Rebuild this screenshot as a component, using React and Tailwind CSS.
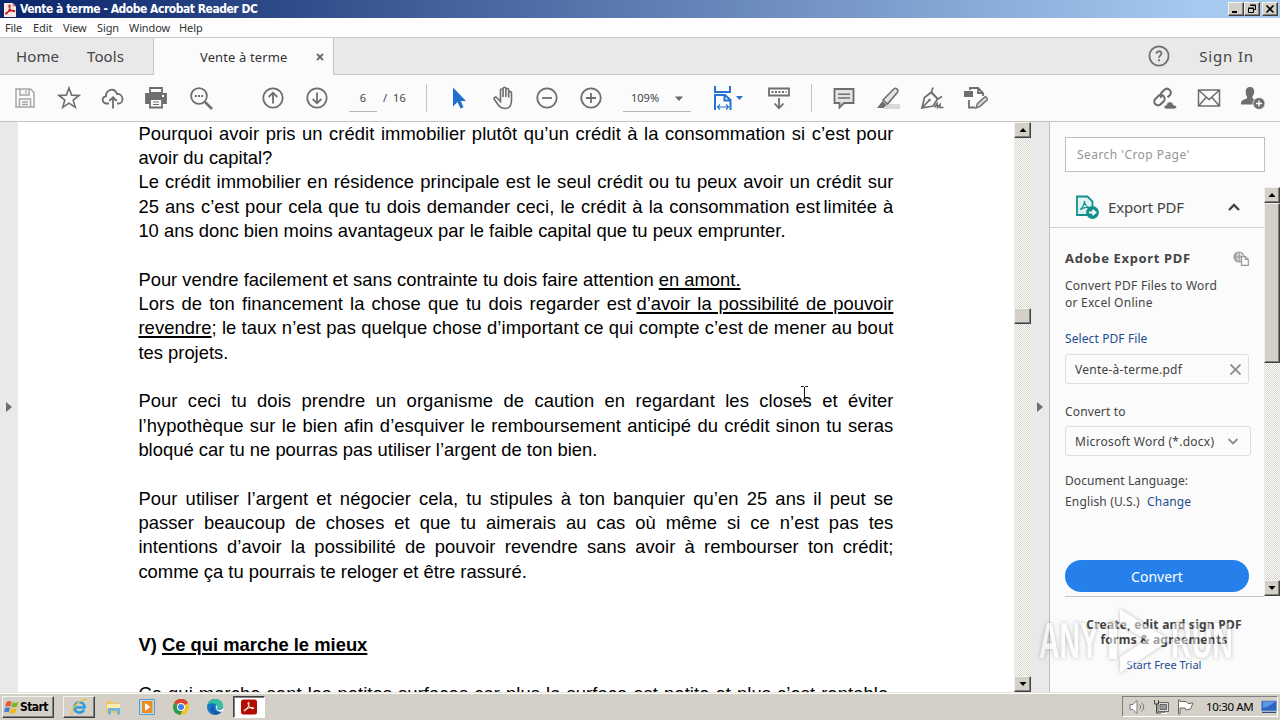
import clsx from 'clsx'

const UI = "font-['Noto_Sans','Open_Sans',sans-serif]"
const RAISED =
  'bg-[#d4d0c8] border border-t-[#f4f2ee] border-l-[#f4f2ee] border-r-[#404040] border-b-[#404040] shadow-[inset_-1px_-1px_0_#808080]'
const DITHER = 'bg-[repeating-conic-gradient(#fdfdfb_0_25%,#d8d5ce_0_50%)] bg-[length:2px_2px]'

const Icon = ({ children, size = 24, className }) => (
  <svg
    width={size}
    height={size}
    viewBox="0 0 24 24"
    fill="none"
    stroke="#6e6e6e"
    strokeWidth="1.8"
    className={clsx('block shrink-0', className)}
  >
    {children}
  </svg>
)

const Cell = ({ children }) => (
  <div className="w-11 h-full flex items-center justify-center shrink-0">{children}</div>
)

const WinButton = ({ children, className }) => (
  <div className={clsx(RAISED, 'w-4 h-[14px] flex items-center justify-center', className)}>
    <svg width="10" height="10" viewBox="0 0 10 10" fill="none" stroke="#000" className="block">
      {children}
    </svg>
  </div>
)

const ArrowButton = ({ down, className }) => (
  <div className={clsx(RAISED, 'h-4 w-full shrink-0 flex items-center justify-center', className)}>
    <svg width="8" height="4" viewBox="0 0 8 4" className="block">
      <path d={down ? 'M0.5 0h7L4 4z' : 'M0.5 4h7L4 0z'} fill="#000" />
    </svg>
  </div>
)

const TitleBar = () => (
  <div className="h-[18px] shrink-0 flex items-center pl-1 pr-[2px] bg-[linear-gradient(90deg,#0a246a,#a6caf0_94%)]">
    <svg width="12" height="15" viewBox="0 0 12 15" className="block">
      <path d="M0 1h8.500l3.500 3.500V15H0z" fill="#f6e9e8" />
      <path d="M8.500 1v3.500H12z" fill="#c98a86" />
      <path
        d="M2 12c1.500-.3 4-4.500 4-8 0-1-1-1-1 0 0 3 3 5.500 5 5.500 1.200 0 .8-1-.5-1C7 8.500 4 9.500 2.500 10.500 1.500 11.300 1.500 12 2 12z"
        fill="none"
        stroke="#c4231c"
        strokeWidth="1.300"
      />
    </svg>
    <span className="ml-1 text-[12px] leading-[18px] font-bold text-white tracking-[-0.480px] font-['DejaVu_Sans_Condensed','DejaVu_Sans',sans-serif] whitespace-nowrap">
      Vente à terme - Adobe Acrobat Reader DC
    </span>
    <div className="ml-auto flex">
      <WinButton>
        <path d="M1 8h5" strokeWidth="2" />
      </WinButton>
      <WinButton>
        <path d="M3.500 1.500h5v4h-2M3 1h6M1.500 4.500h5v4h-5zM1 4h6" />
      </WinButton>
      <WinButton className="ml-[2px]">
        <path d="M1.500 1.500l7 7M8.500 1.500l-7 7" strokeWidth="1.600" />
      </WinButton>
    </div>
  </div>
)

const MenuBar = () => (
  <div className="h-5 shrink-0 flex items-center pl-[5px] pt-[2px] bg-[#fdfdfd] border-b border-[#c9c9c9] text-[11px] tracking-[-0.100px] text-[#333]">
    <span className="w-7">File</span>
    <span className="w-[30px]">Edit</span>
    <span className="w-[34px]">View</span>
    <span className="w-8">Sign</span>
    <span className="w-[50px]">Window</span>
    <span>Help</span>
  </div>
)

const Tabs = () => (
  <div className="h-[37px] shrink-0 flex bg-[#e9e9e9] text-[#444]">
    <div className="w-[154px] flex items-center pl-4 border-b border-r border-[#c6c6c6] text-[15px] tracking-[0.100px]">
      <span className="w-[71px]">Home</span>
      <span>Tools</span>
    </div>
    <div className="w-[179px] flex items-center justify-between pl-[46px] pr-[9px] bg-[#fbfbfb] text-[13px] text-[#333]">
      <span className="tracking-[0.120px] pt-[2px]">Vente à terme</span>
      <svg width="8" height="8" viewBox="0 0 8 8" stroke="#6b6b6b" strokeWidth="1.900" className="block">
        <path d="M1 1l6 6M7 1L1 7" />
      </svg>
    </div>
    <div className="flex-1 flex items-center justify-end border-b border-l border-[#c6c6c6] pr-[26px]">
      <Icon>
        <circle cx="12" cy="12" r="9.600" />
        <path d="M9.500 9.800c0-3.400 5-3.200 5-.4 0 1.900-2.500 2-2.500 4.300M12 15.300v2" />
      </Icon>
      <span className="ml-[28px] text-[15px] tracking-[0.850px]">Sign In</span>
    </div>
  </div>
)

const Toolbar = () => (
  <div className="h-[47px] shrink-0 flex items-center pl-[3px] pr-[5px] bg-[#fbfbfb] border-b border-[#c4c4c4] text-[11px] text-[#444]">
    <Cell>
      <Icon className="opacity-60" size={24}>
        <path d="M3 3h14.500L21 6.500V21H3zM7 3v6h9V3M6.500 21v-8h11v8M13 4.500v3M9 16h6M9 18.500h6" strokeWidth="1.500" />
      </Icon>
    </Cell>
    <Cell>
      <Icon>
        <path d="M12 2l2.600 7.100 7.500.3-5.900 4.700 2.100 7.300L12 17.200l-6.300 4.200 2.100-7.300L1.900 9.400l7.500-.3z" strokeWidth="1.600" />
      </Icon>
    </Cell>
    <Cell>
      <Icon>
        <path d="M8 17.500H6C.5 17.500.3 11 5 10.300 5 3.500 13.500 1 16 8c6-1 8 9.500 1.500 9.500H16M12 22.500V11.500M8.300 15l3.700-3.800 3.700 3.800" />
      </Icon>
    </Cell>
    <Cell>
      <Icon className="mr-[2px]">
        <path d="M6 2h12v5H6z" fill="#fbfbfb" />
        <path d="M2 8h20v9H2z" fill="#6e6e6e" />
        <path d="M6 13h12v8.500H6z" fill="#fbfbfb" />
        <path d="M9 16h6M9 18.500h6" strokeWidth="1.200" />
        <path d="M18 10h2" stroke="#fff" />
      </Icon>
    </Cell>
    <Cell>
      <Icon>
        <circle cx="10" cy="10" r="7.900" />
        <path d="M16 16l7 7" strokeWidth="2.500" />
        <path d="M5.800 10h2M9 10h2M12.200 10h2" />
      </Icon>
    </Cell>
    <div className="w-7" />
    <Cell>
      <Icon>
        <circle cx="12" cy="12" r="9.700" />
        <path d="M12 17.500V7M7.700 11L12 6.700l4.300 4.300" />
      </Icon>
    </Cell>
    <Cell>
      <Icon>
        <circle cx="12" cy="12" r="9.700" />
        <path d="M12 6.500V17M7.700 13l4.300 4.300 4.300-4.300" />
      </Icon>
    </Cell>
    <div className="w-[87px] flex pl-[10px] items-center">
      <div className="w-7 h-[27px] mt-[1px] border-b border-[#b9b9b9] text-center leading-[25px]">6</div>
      <span className="ml-[6px]">/</span>
      <span className="ml-[6px]">16</span>
    </div>
    <div className="w-px h-7 bg-[#c4c4c4] mr-[10px]" />
    <Cell>
      <Icon>
        <path d="M6 1.500v19l4.500-4.500 3 6.500 3-1.300-2.800-6.200h5.300z" fill="#1f6fcf" stroke="none" />
      </Icon>
    </Cell>
    <Cell>
      <Icon>
        <path
          d="M8 13V4.500c0-2 2.600-2 2.600 0V11 2.800c0-2 2.800-2 2.800 0V11 4c0-2 2.800-2 2.800 0v7.500V7c0-1.800 2.800-1.800 2.800 0v7c0 5.500-2 8.500-6.500 8.500-4 0-6-2-10.700-9.300-.8-1.800 1.400-2.800 2.800-1.200L8 15.500z"
          transform="translate(1.500 0)"
          strokeWidth="1.600"
        />
      </Icon>
    </Cell>
    <Cell>
      <Icon>
        <circle cx="12" cy="12" r="9.700" />
        <path d="M7 12h10" />
      </Icon>
    </Cell>
    <Cell>
      <Icon>
        <circle cx="12" cy="12" r="9.700" />
        <path d="M7 12h10M12 7v10" />
      </Icon>
    </Cell>
    <div className="ml-[10px] w-[68px] h-[27px] mt-[1px] flex items-center justify-between pl-2 pr-2 border-b border-[#b9b9b9]">
      <span>109%</span>
      <svg width="8" height="5" viewBox="0 0 8 5">
        <path d="M0 .5h8L4 5z" fill="#666" />
      </svg>
    </div>
    <div className="w-[66px] pl-[20px] flex items-center">
      <Icon className="-mt-px" size={24}>
        <path d="M4 0v6h15V0M4 24V9h10l5.500 5v10M13.500 9v5.500h6" stroke="#2672cf" strokeWidth="2" />
        <path d="M7 21h10M9 18.500L6.500 21 9 23.500M15 18.500l2.500 2.500-2.500 2.500" stroke="#2672cf" strokeWidth="1.200" />
      </Icon>
      <svg width="7" height="4" viewBox="0 0 7 4" className="block ml-px shrink-0">
        <path d="M0 0h7L3.500 4z" fill="#2672cf" />
      </svg>
    </div>
    <Cell>
      <Icon>
        <path d="M2 2.500h20v7H2zM12 12v10M7.500 17.500l4.500 4.700 4.500-4.700" />
        <path d="M4.500 6h15" strokeDasharray="2 1.500" />
      </Icon>
    </Cell>
    <div className="ml-[10px] w-px h-7 bg-[#c4c4c4] mr-[10px]" />
    <Cell>
      <Icon>
        <path d="M2.500 3h19v14H12l-4.500 4.500V17h-5z" fill="#e3e3e3" />
        <path d="M6 8.300h12M6 12h12" strokeWidth="1.500" />
      </Icon>
    </Cell>
    <Cell>
      <Icon>
        <path d="M11 18h13v5H7z" fill="#d9d9d9" stroke="none" />
        <path d="M7 14L18 2.800c2-1.500 5 1 3.500 3.400L11.500 18z" fill="#e3e3e3" strokeWidth="1.600" />
        <path d="M6.500 15l4 4-3 3H1z" fill="#6e6e6e" stroke="none" />
      </Icon>
    </Cell>
    <Cell>
      <Icon>
        <path
          d="M2 22L4.500 11.500 11 6.500l6.500 6.500-4.500 7zM2.500 21.500l6.500-7M13 1.500L11.500 6l6.500 7 4-2.500"
          strokeWidth="1.700"
        />
        <circle cx="9.500" cy="14" r="1.300" fill="#6e6e6e" stroke="none" />
        <path d="M14.500 21.500l2.500-4 .5 4 2.500-3v3h3.500" strokeWidth="1.600" />
      </Icon>
    </Cell>
    <Cell>
      <Icon>
        <path d="M6 4V2h8l5 5v3M14 2v5h5M5 14v7.500h6" />
        <path d="M0 5h9v6H0z" fill="#6e6e6e" stroke="none" />
        <path d="M12 22l1.500-4.500 8-7 2.500 2.800-8 7z" fill="#d9d9d9" strokeWidth="1.400" />
      </Icon>
    </Cell>
    <div className="ml-auto" />
    <Cell>
      <Icon>
        <g transform="rotate(-45 10 11)" strokeWidth="2.100">
          <rect x="-.5" y="7" width="11.500" height="7.500" rx="3.700" />
          <path d="M8.500 10.500c0-2.300 1.400-3.500 3.400-3.500h4.200c4.700 0 4.700 7.500 0 7.500H13" />
        </g>
        <path d="M13.500 23c-3.500 0-3-4 0-4 .5-4 6-4.500 7 0 4 0 4 4 .5 4z" fill="#6e6e6e" stroke="#fbfbfb" strokeWidth=".7" />
      </Icon>
    </Cell>
    <Cell>
      <Icon>
        <path d="M1.500 4h21v16h-21zM2 4.500l10 9 10-9M2 19.500l7-8M22 19.500l-7-8" strokeWidth="1.500" />
      </Icon>
    </Cell>
    <Cell>
      <Icon>
        <path
          d="M9 1c3 0 4.500 2 4.200 5-.2 2.500-1.200 3.500-1.700 4.500v2l4 2v4H0c0-4 1.500-4.500 6-6v-2C5 9.500 4.700 8 4.700 6 4.500 3 6 1 9 1z"
          fill="#6e6e6e"
          stroke="none"
        />
        <circle cx="18" cy="17.500" r="6" fill="#6e6e6e" stroke="#fbfbfb" strokeWidth=".8" />
        <path d="M15 17.500h6M18 14.500v6" stroke="#fff" strokeWidth="1.400" />
      </Icon>
    </Cell>
  </div>
)

const Line = ({ children, last }) => (
  <div
    className={clsx(
      'h-[24.350px] leading-[24.350px] whitespace-nowrap',
      !last && 'tracking-[0.070px] [text-align-last:justify]'
    )}
  >
    {children}
  </div>
)

const Under = ({ children, className }) => (
  <span className={clsx('underline decoration-[1.500px] underline-offset-[2px]', className)}>{children}</span>
)

const Document = () => (
  <div className="relative flex-1 h-full overflow-hidden bg-white pl-[120.400px] font-['Liberation_Sans',Arial,sans-serif] text-[18.400px] text-black">
    <div className="w-[755px] -mt-[0.400px]">
      <Line>Pourquoi avoir pris un crédit immobilier plutôt qu’un crédit à la consommation si c’est pour</Line>
      <Line last>avoir du capital?</Line>
      <Line>Le crédit immobilier en résidence principale est le seul crédit ou tu peux avoir un crédit sur</Line>
      <Line>
        25 ans c’est pour cela que tu dois demander ceci, le crédit à la consommation est{' '}
        <span className="-ml-[3px]">limitée à</span>
      </Line>
      <Line last>10 ans donc bien moins avantageux par le faible capital que tu peux emprunter.</Line>
      <Line />
      <Line last>
        Pour vendre facilement et sans contrainte tu dois faire attention <Under>en amont.</Under>
      </Line>
      <Line>
        Lors de ton financement la chose que tu dois regarder est{' '}
        <Under className="tracking-[-0.030px] -ml-[2px]">d’avoir la possibilité de pouvoir</Under>
      </Line>
      <Line>
        <Under>revendre</Under>; le taux n’est pas quelque chose d’important ce qui compte c’est de mener au bout
      </Line>
      <Line last>tes projets.</Line>
      <Line />
      <Line>Pour ceci tu dois prendre un organisme de caution en regardant les closes et éviter</Line>
      <Line>l’hypothèque sur le bien afin d’esquiver le remboursement anticipé du crédit sinon tu seras</Line>
      <Line last>bloqué car tu ne pourras pas utiliser l’argent de ton bien.</Line>
      <Line />
      <Line>Pour utiliser l’argent et négocier cela, tu stipules à ton banquier qu’en 25 ans il peut se</Line>
      <Line>passer beaucoup de choses et que tu aimerais au cas où même si ce n’est pas tes</Line>
      <Line>intentions d’avoir la possibilité de pouvoir revendre sans avoir à rembourser ton crédit;</Line>
      <Line last>comme ça tu pourrais te reloger et être rassuré.</Line>
      <Line />
      <Line />
      <Line last>
        <b>
          V) <Under>Ce qui marche le mieux</Under>
        </b>
      </Line>
      <Line />
      <Line>Ce qui marche sont les petites surfaces car plus la surface est petite et plus c’est rentable,</Line>
    </div>
    <svg width="9" height="17" viewBox="0 0 9 17" fill="none" stroke="#111" className="absolute left-[782px] top-[264px]">
      <path d="M1 .5h2.500l1 1 1-1H8M4.500 1v14M1 16h2.500l1-1 1 1H8" />
    </svg>
  </div>
)

const Scrollbar = () => (
  <div className={clsx(DITHER, 'w-[17px] h-full flex flex-col shrink-0')}>
    <ArrowButton />
    <div className="h-[170px]" />
    <div className={clsx(RAISED, 'h-4')} />
    <ArrowButton down className="mt-auto" />
  </div>
)

const ExportPanel = () => (
  <div className="w-[230px] h-full shrink-0 bg-[#fbfbfb] text-[#444] text-[12px] flex flex-col">
    <div className="ml-[15px] mt-[15px] w-[200px] h-[35px] shrink-0 flex items-center pl-[11px] pt-px bg-white border border-[#c0c0c0] text-[12px] tracking-[0.450px] text-[#959595]">
      Search 'Crop Page'
    </div>
    <div className="mt-[15px] h-[409px] shrink-0 flex">
      <div className="flex-1 flex flex-col">
        <div className="h-[41px] shrink-0 flex items-center pl-[26px] pr-[24px] border-b border-[#cfcfcf]">
          <svg width="23" height="24" viewBox="0 0 23 24" fill="none" stroke="#12908c" strokeWidth="1.800">
            <path d="M1 1.500h10.500l5 5V20H1z" fill="#dff1f4" />
            <path d="M4 14.500c2-1 4.500-5 4.500-8.500 0 3.500 2.500 6 5 6.500-3-.5-6.500.3-9 2" strokeWidth="1.200" />
            <circle cx="16.500" cy="17.500" r="5.500" fill="#12908c" />
            <path d="M13 17.500h5M16.500 14.800l3 2.700-3 2.700" stroke="#fff" />
          </svg>
          <span className="ml-[9px] text-[15px] tracking-[-0.200px]">Export PDF</span>
          <svg width="12" height="8" viewBox="0 0 12 8" fill="none" stroke="#444" strokeWidth="2.400" className="ml-auto">
            <path d="M1 7l5-5 5 5" />
          </svg>
        </div>
        <div className="pl-[15px] flex flex-col whitespace-nowrap tracking-[0.250px]">
          <div className="mt-[22px] h-4 flex items-center justify-between pr-[15px]">
            <b className="text-[13px] leading-4 tracking-[0.650px]">Adobe Export PDF</b>
            <svg width="16" height="15" viewBox="0 0 16 15" fill="none" stroke="#999" strokeWidth="1.200">
              <circle cx="6" cy="6" r="5" fill="#ddd" />
              <path d="M1 6h10M6 1v10M3.500 2c-1 2.500-1 5.500 0 8" />
              <path d="M8.500 5.500h4l2.800 2.800v6H8.500z" fill="#fbfbfb" />
              <path d="M12.200 5.500v3h3" />
            </svg>
          </div>
          <div className="mt-[11px] leading-[17px]">
            Convert PDF Files to Word
            <br />
            or Excel Online
          </div>
          <div className="mt-[20px] leading-4 tracking-[0.100px] text-[#1b4e8f]">Select PDF File</div>
          <div className="mt-[7px] w-[184px] h-[30px] flex items-center justify-between pl-[9px] pr-[7px] pt-px border border-[#dedede] rounded-[3px]">
            <span>Vente-à-terme.pdf</span>
            <svg width="11" height="11" viewBox="0 0 11 11" stroke="#8c8c8c" strokeWidth="1.800">
              <path d="M.5.5l10 10M10.500.5l-10 10" />
            </svg>
          </div>
          <div className="mt-[20px] leading-4 tracking-[0.150px]">Convert to</div>
          <div className="mt-[6px] w-[186px] h-[30px] flex items-center justify-between pl-[9px] pr-[12px] pt-px border border-[#dedede] rounded-[3px]">
            <span>Microsoft Word (*.docx)</span>
            <svg width="10" height="7" viewBox="0 0 10 7" fill="none" stroke="#8c8c8c" strokeWidth="1.800">
              <path d="M.5 1L5 5.500 9.500 1" />
            </svg>
          </div>
          <div className="mt-[17px] leading-4 tracking-[0.100px]">Document Language:</div>
          <div className="mt-[5px] leading-4 tracking-[0.150px]">
            English (U.S.) <span className="ml-1 text-[#1b4e8f]">Change</span>
          </div>
          <div className="mt-[50px] w-[184px] h-8 rounded-full bg-[#2680eb] text-white text-[14px] tracking-normal flex items-center justify-center">
            Convert
          </div>
          <div className="mt-1 h-px shrink-0 bg-[#c4c4c4]" />
        </div>
      </div>
      <div className={clsx(DITHER, 'w-4 flex flex-col')}>
        <ArrowButton />
        <div className={clsx(RAISED, 'h-[160px]')} />
        <ArrowButton down className="mt-auto" />
      </div>
    </div>
    <div className="mt-[21px] pr-[2px] text-center">
      <div className="font-bold text-[12px] leading-[15px] tracking-[0.250px]">
        Create, edit and sign PDF
        <br />
        forms &amp; agreements
      </div>
      <div className="mt-[10px] text-[11px] leading-4 text-[#1b4e8f]">Start Free Trial</div>
    </div>
  </div>
)

const Handle = ({ className }) => (
  <div className={clsx('shrink-0 h-full bg-[#e9e9e9] flex items-center', className)}>
    <svg width="6" height="10" viewBox="0 0 6 10" className="block">
      <path d="M0 0l6 5-6 5z" fill="#6e6e6e" />
    </svg>
  </div>
)

const Watermark = () => (
  <svg
    width="200"
    height="76"
    viewBox="0 0 200 76"
    className="absolute left-[1036px] top-[603px] opacity-50 drop-shadow-[0_0_2px_rgba(0,0,0,0.5)]"
  >
    <g fill="#fff" fontFamily="Liberation Sans" fontSize="50" fontWeight="bold">
      <text x="3" y="55" textLength="60" lengthAdjust="spacingAndGlyphs">ANY</text>
      <text x="135" y="55" textLength="62" lengthAdjust="spacingAndGlyphs">RUN</text>
    </g>
    <path d="M73 19h8v37h-8zM84 6l50 31-50 33V54l26-17-26-16z" fill="#fff" />
  </svg>
)

const TaskIcon = ({ children, className }) => (
  <div className={clsx('w-8 h-[22px] flex items-center justify-center', className)}>
    <svg width="18" height="18" viewBox="0 0 18 18" fill="none" className="block">
      {children}
    </svg>
  </div>
)

const Taskbar = () => (
  <div className="h-7 shrink-0 flex items-center pl-[2px] pr-[2px] bg-[#d4d0c8] border-t border-[#e6e3dd] shadow-[inset_0_1px_0_#fff] text-black">
    <div className={clsx(RAISED, 'w-[52px] h-[22px] flex items-center pl-px')}>
      <svg width="16" height="16" viewBox="0 0 16 16" className="block shrink-0">
        <path d="M2.500 3c2-1.500 3.500-1.300 5-.3L6.300 7.500C4.500 6.500 3 6.800 1.200 7.700z" fill="#e8562a" />
        <path d="M8.500 3c2 1 4 .8 6-.3L13 7.500c-2 1-4 1.200-5.800.2z" fill="#7db52e" />
        <path d="M1 9c1.800-1 3.500-1 5-.2L4.700 13.500C3 12.500 1.500 12.700 0 13.500z" fill="#3d7fd0" />
        <path d="M7 9.200c2 1 4 .8 5.800-.1l-1.500 4.700c-1.800 1-3.700 1.100-5.600.1z" fill="#f3b61b" />
      </svg>
      <span className="text-[12px] font-bold tracking-[-0.550px] font-['DejaVu_Sans_Condensed','DejaVu_Sans',sans-serif]">
        Start
      </span>
    </div>
    <TaskIcon className={clsx(RAISED, 'ml-[9px]')}>
      <path d="M4.500 9.500h10c0-7-10-7-10 0 0 6 7.500 6.500 9.500 2.300" stroke="#2f9be0" strokeWidth="2.600" />
      <path d="M2 16.500C0 12 9 .5 17 1.500" stroke="#ecc142" strokeWidth="1.400" />
    </TaskIcon>
    <TaskIcon className="ml-[2px]">
      <path d="M2 3h6l1 1.500h6V15H2z" fill="#e9c766" />
      <path d="M3 6h13v5H3z" fill="#f8eab0" />
      <path d="M4 16.500V10h12v6.500h-3V13H7v3.500z" fill="#70b6dc" />
    </TaskIcon>
    <TaskIcon className="ml-[2px]">
      <path d="M1.500 1.500h15v15h-15z" fill="#bcdcf0" stroke="#5b9cc9" />
      <path d="M4 3h10.500v12H4z" fill="#f08b1d" />
      <path d="M7 5l5.500 4L7 13z" fill="#fff" />
    </TaskIcon>
    <TaskIcon className="ml-[2px]">
      <circle cx="9" cy="9" r="8" fill="#f7c325" />
      <path d="M9 9L2.100 5A8 8 0 0 1 16 5z" fill="#dd4335" />
      <path d="M9 9L2.100 5a8 8 0 0 0 6 12l3.500-6z" fill="#2c9d4f" />
      <path d="M2.100 5A8 8 0 0 1 16 5H9z" fill="#dd4335" />
      <circle cx="9" cy="9" r="4" fill="#fff" />
      <circle cx="9" cy="9" r="3" fill="#3f7fe8" />
    </TaskIcon>
    <TaskIcon className="ml-[2px]">
      <circle cx="9" cy="9" r="8" fill="#1874c9" />
      <path d="M1.500 7C4-1.500 17-.5 17 8c0 3-3 4-6 3 1-2 0-5-3-5.500C5 5 3 5.500 1.500 7z" fill="#38bfa0" />
      <path d="M8 7.500c-2 4 2 7.500 7.500 6-3 4.500-10 3.500-10.500-1.500 0-2 1-4 3-4.500z" fill="#125aa5" />
      <path d="M10 7c2 1 1.500 3 .8 4 2 1.500 5 1 6.200-1l1 3c-4 2-9.500 0-8-6z" fill="#e9f1ee" />
    </TaskIcon>
    <TaskIcon className="ml-[2px] bg-white border border-t-[#404040] border-l-[#404040] border-r-white border-b-white shadow-[inset_1px_1px_0_#808080]">
      <rect x="1" y="1.500" width="16" height="15" rx="2.500" fill="#b30b00" />
      <path
        d="M4.500 13c2-.5 4.500-5 4.500-8 0-1-1-1-1 0 0 3 2.500 5.500 5 5.700 1.300 0 1-1.200-.5-1.200C9.500 9.500 6.500 10.300 4.800 11.500 3.800 12.300 3.800 13 4.500 13z"
        stroke="#fff"
        strokeWidth="1"
      />
    </TaskIcon>
    <div className="ml-auto w-[156px] h-[21px] flex items-center pl-[6px] border border-t-[#808080] border-l-[#808080] border-r-white border-b-white">
      <svg width="17" height="16" viewBox="0 0 17 16" fill="none" stroke="#777" className="block shrink-0">
        <path d="M1 5.500h3l4-4v13l-4-4H1z" fill="#fff" />
        <path d="M10.500 5.500c1.500 1.500 1.500 3.500 0 5M12.500 3.500c3 3 3 6 0 9" />
      </svg>
      <svg width="17" height="16" viewBox="0 0 17 16" fill="none" stroke="#666" className="block shrink-0 ml-[7px]">
        <path d="M5 3.500h10.500v9H5z" fill="#ddd" />
        <path d="M7 5.500h6.500v5H7z" fill="#999" />
        <path d="M1.500 1v4h4V1M3.500 5v9H12" stroke="#444" />
        <path d="M8 14.500h6" stroke="#fff" />
      </svg>
      <svg width="17" height="16" viewBox="0 0 17 16" fill="#fff" stroke="#666" className="block shrink-0 ml-[7px]">
        <path d="M1.500 1v14h1.500V9h5l1 2 4.500-1L16 4l-5 .5-2-2H3V1z" />
      </svg>
      <span className="ml-[12px] text-[11.500px] tracking-[-0.350px] whitespace-nowrap">10:30 AM</span>
      <svg width="16" height="13" viewBox="0 0 16 13" className="block shrink-0 ml-auto">
        <path d="M.5 1h15v10H.5z" fill="#2b65c4" stroke="#7d9cc9" />
        <path d="M2 2h12l-8 5-4 1z" fill="#5c97e6" />
        <path d="M1 12.500h14" stroke="#334e7d" />
      </svg>
    </div>
  </div>
)

export default function App() {
  return (
    <div className={clsx(UI, 'relative w-[1280px] h-[720px] overflow-hidden flex flex-col bg-white')}>
      <TitleBar />
      <MenuBar />
      <Tabs />
      <Toolbar />
      <div className="h-[570px] shrink-0 flex">
        <Handle className="w-[18px] pl-[6px]" />
        <Document />
        <Scrollbar />
        <Handle className="w-[19px] pl-[6px] border-r border-[#c0c0c0]" />
        <ExportPanel />
      </div>
      <Taskbar />
      <Watermark />
    </div>
  )
}
